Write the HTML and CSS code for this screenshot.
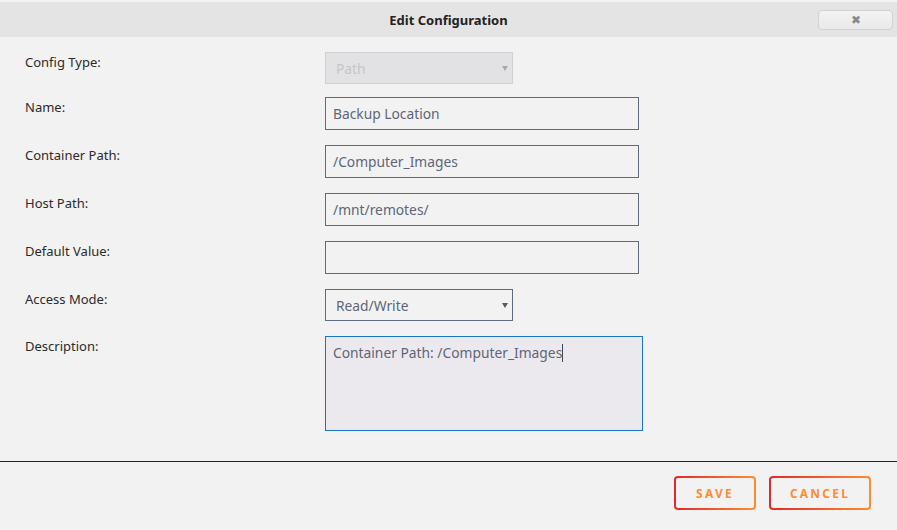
FILE: index.html
```html
<!DOCTYPE html>
<html>
  <head>
    <title>Edit Configuration</title>
    <link rel="stylesheet" href="styles.css">
  </head>
  <body>
    <div class="dialog">
      <!-- Title bar -->
      <div class="titlebar">
        <span class="title">Edit Configuration</span>
        <button type="button" class="close">&#10006;</button>
      </div>

      <!-- Form -->
      <form class="content" id="config-form">
        <div class="row">
          <label>Config Type:</label>
          <div class="select-wrap disabled">
            <select disabled>
              <option>Path</option>
            </select>
          </div>
        </div>
        <div class="row">
          <label for="name">Name:</label>
          <input type="text" id="name" value="Backup Location" />
        </div>
        <div class="row">
          <label for="container_path">Container Path:</label>
          <input type="text" id="container_path" value="/Computer_Images" />
        </div>
        <div class="row">
          <label for="host_path">Host Path:</label>
          <input type="text" id="host_path" value="/mnt/remotes/" />
        </div>
        <div class="row">
          <label for="default_value">Default Value:</label>
          <input type="text" id="default_value" value="" />
        </div>
        <div class="row">
          <label for="mode">Access Mode:</label>
          <div class="select-wrap">
            <select id="mode">
              <option>Read/Write</option>
              <option>Read Only</option>
            </select>
          </div>
        </div>
        <div class="row">
          <label>Description:</label>
          <div class="desc">Container Path: /Computer_Images<span class="caret"></span></div>
        </div>
      </form>

      <!-- Footer buttons -->
      <div class="footer">
        <button type="button" class="btn btn-save">Save</button>
        <button type="button" class="btn btn-cancel">Cancel</button>
      </div>
    </div>
  </body>
</html>
```

FILE: styles.css
```css
:root {
  --bg: #f2f2f2;
  --text: #2b2b2b;
  --field-text: #5d6678;
  --field-border: #5f6b7e;
  --focus: #1a72cc;
  --orange: #ff8c2f;
  --red: #e22828;
}

* {
  box-sizing: border-box;
}

body {
  margin: 0;
  background: var(--bg);
  font-family: "Noto Sans", "Open Sans", sans-serif;
  font-size: 13px;
  color: var(--text);
}

.dialog {
  height: 530px;
  display: flex;
  flex-direction: column;
}

.titlebar {
  margin-top: 2px;
  height: 35px;
  background: #e4e4e4;
  display: flex;
  align-items: center;
  justify-content: center;
  position: relative;
}

.title {
  font-weight: 700;
  font-size: 13px;
  color: #222;
}

.close {
  position: absolute;
  right: 4px;
  top: 8px;
  width: 75px;
  height: 20px;
  padding: 0;
  border: 1px solid #d2d2d2;
  border-radius: 4px;
  background: linear-gradient(#f3f3f3, #e9e9e9);
  color: #888;
  font-size: 12px;
  line-height: 18px;
  cursor: pointer;
}

.content {
  flex: 1;
  padding: 15px 0 0 25px;
}

.row {
  display: grid;
  grid-template-columns: 300px auto;
  align-items: start;
  margin-bottom: 15px;
}

.row:first-child {
  margin-bottom: 13px;
}

label {
  line-height: 20px;
  color: var(--text);
}

input,
select,
.desc {
  font-family: inherit;
  font-size: 13.8px;
  color: var(--field-text);
}

input {
  width: 314px;
  height: 33px;
  padding: 0 7px;
  border: 1px solid var(--field-border);
  border-radius: 0;
  background: var(--bg);
  outline: none;
}

.select-wrap {
  position: relative;
  width: 188px;
}

.select-wrap select {
  width: 100%;
  height: 32px;
  padding: 0 10px;
  appearance: none;
  -webkit-appearance: none;
  border: 1px solid var(--field-border);
  border-radius: 0;
  background: var(--bg);
  outline: none;
}

.select-wrap::after {
  content: "";
  position: absolute;
  right: 5px;
  top: 14px;
  border-left: 3px solid transparent;
  border-right: 3px solid transparent;
  border-top: 5px solid #555c68;
  pointer-events: none;
}

.select-wrap.disabled select {
  background: #dcdce0;
  border-color: #c4c4c8;
  color: #b2b2b6;
}

.select-wrap.disabled::after {
  border-top-color: #a9a9ad;
}

.desc {
  width: 318px;
  height: 95px;
  padding: 6px 7px;
  border: 1px solid var(--focus);
  background: #ebe9ed;
  line-height: 20px;
}

.caret {
  display: inline-block;
  width: 1px;
  height: 18px;
  background: #404652;
  vertical-align: -4px;
}

.footer {
  border-top: 1px solid #222;
  height: 69px;
  display: flex;
  justify-content: flex-end;
  align-items: flex-start;
  gap: 13px;
  padding: 14px 26px 0 0;
}

.btn {
  height: 34px;
  padding: 0;
  border: 2px solid transparent;
  border-radius: 4px;
  background: linear-gradient(var(--bg), var(--bg)) padding-box,
    linear-gradient(90deg, var(--red), var(--orange)) border-box;
  color: var(--orange);
  font-family: inherit;
  font-size: 12px;
  font-weight: 700;
  text-transform: uppercase;
  letter-spacing: 2.2px;
  cursor: pointer;
}

.btn-save {
  width: 82px;
}

.btn-cancel {
  width: 102px;
}
```
